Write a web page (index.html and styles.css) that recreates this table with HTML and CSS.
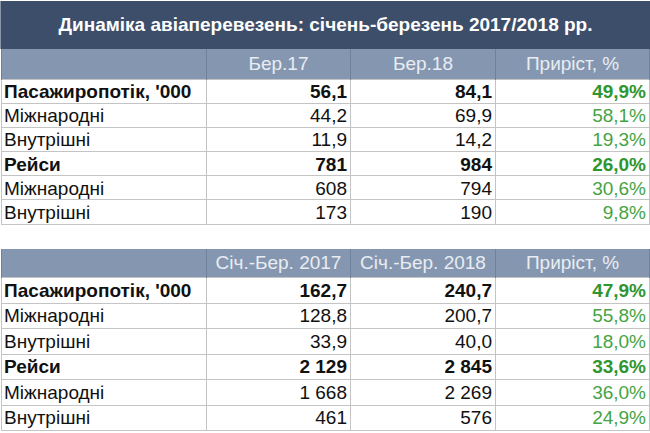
FILE: index.html
```html
<!DOCTYPE html>
<html lang="uk">
<head>
<meta charset="utf-8">
<title>Динаміка авіаперевезень</title>
<link rel="stylesheet" href="styles.css">
</head>
<body>
<div class="sheet">
  <div class="title">Динаміка авіаперевезень: січень-березень 2017/2018 рр.</div>
  <table class="data t1">
    <colgroup><col class="c1"><col class="c2"><col class="c3"><col class="c4"></colgroup>
    <thead>
      <tr><th></th><th>Бер.17</th><th>Бер.18</th><th>Приріст, %</th></tr>
    </thead>
    <tbody>
      <tr class="main"><td>Пасажиропотік, '000</td><td>56,1</td><td>84,1</td><td class="g">49,9%</td></tr>
      <tr><td>Міжнародні</td><td>44,2</td><td>69,9</td><td class="g">58,1%</td></tr>
      <tr><td>Внутрішні</td><td>11,9</td><td>14,2</td><td class="g">19,3%</td></tr>
      <tr class="main"><td>Рейси</td><td>781</td><td>984</td><td class="g">26,0%</td></tr>
      <tr><td>Міжнародні</td><td>608</td><td>794</td><td class="g">30,6%</td></tr>
      <tr><td>Внутрішні</td><td>173</td><td>190</td><td class="g">9,8%</td></tr>
    </tbody>
  </table>
  <table class="data t2">
    <colgroup><col class="c1"><col class="c2"><col class="c3"><col class="c4"></colgroup>
    <thead>
      <tr><th></th><th>Січ.-Бер. 2017</th><th>Січ.-Бер. 2018</th><th>Приріст, %</th></tr>
    </thead>
    <tbody>
      <tr class="main"><td>Пасажиропотік, '000</td><td>162,7</td><td>240,7</td><td class="g">47,9%</td></tr>
      <tr><td>Міжнародні</td><td>128,8</td><td>200,7</td><td class="g">55,8%</td></tr>
      <tr><td>Внутрішні</td><td>33,9</td><td>40,0</td><td class="g">18,0%</td></tr>
      <tr class="main"><td>Рейси</td><td>2 129</td><td>2 845</td><td class="g">33,6%</td></tr>
      <tr><td>Міжнародні</td><td>1 668</td><td>2 269</td><td class="g">36,0%</td></tr>
      <tr><td>Внутрішні</td><td>461</td><td>576</td><td class="g">24,9%</td></tr>
    </tbody>
  </table>
</div>
</body>
</html>
```

FILE: styles.css
```css
html, body {
  margin: 0;
  padding: 0;
  background: #ffffff;
}
body {
  font-family: "Liberation Sans", Arial, sans-serif;
  color: #111111;
}
.sheet {
  width: 650px;
  height: 433px;
  padding-top: 1px;
  box-sizing: border-box;
  overflow: hidden;
}
.title {
  height: 48px;
  background: #3c4e69;
  color: #ffffff;
  font-weight: bold;
  font-size: 19px;
  display: flex;
  align-items: center;
  justify-content: center;
  border-left: 1px solid #8a96a8;
  box-sizing: border-box;
}
.data {
  width: 648px;
  margin-left: 1px;
  border-collapse: collapse;
  table-layout: fixed;
}
.c1 { width: 205px; }
.c2 { width: 144px; }
.c3 { width: 145px; }
.c4 { width: 154px; }
.data th {
  background: #8597b0;
  color: #e9edf3;
  font-weight: normal;
  font-size: 19px;
  text-align: center;
  padding: 0;
  line-height: 1;
  border-left: 1px solid #6f819b;
  border-right: 1px solid #6f819b;
}
.data td {
  border: 1px solid #c4c4c4;
  font-size: 19px;
  padding: 1px 3px 0 2px;
  text-align: right;
  white-space: nowrap;
  line-height: 1;
}
.data td:first-child {
  text-align: left;
}
.data tr.main td {
  font-weight: bold;
}
.data td.g {
  color: #45a445;
}
.data tr.main td.g {
  color: #2f962f;
}
.t1 thead tr { height: 30px; }
.t1 tbody tr { height: 24.2px; }
.t2 {
  margin-top: 24px;
}
.t2 thead tr { height: 29px; }
.t2 tbody tr { height: 25.5px; }
.t2 td {
  padding-top: 0;
}
```
